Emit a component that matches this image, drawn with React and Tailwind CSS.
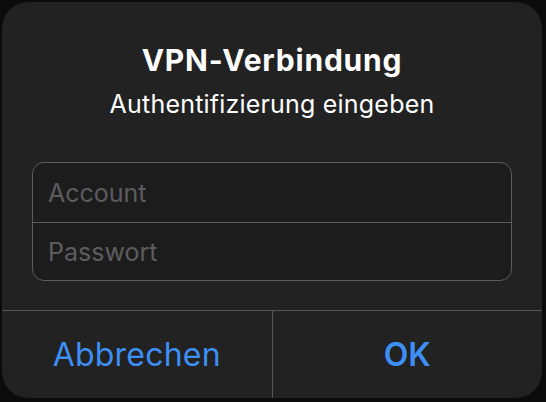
export default function App() {
  return (
    <div
      className="w-[546px] h-[402px] bg-[#0b0b0b] p-[2px]"
      style={{ fontFamily: "Inter, 'Noto Sans', sans-serif" }}
    >
      <div className="w-[540px] h-[396px] bg-[#222222] rounded-[26px] flex flex-col overflow-hidden">
        <div className="flex flex-col items-center pt-[41px]">
          <h1 className="text-[30px] leading-[34px] font-bold text-white tracking-[0.8px]">
            VPN-Verbindung
          </h1>
          <p className="mt-[12px] text-[25px] leading-[30px] text-white tracking-[0.2px]">
            Authentifizierung eingeben
          </p>
        </div>
        <div className="mx-[30px] mt-[43px] rounded-[12px] border border-[#5c5c5e] bg-[#1c1c1d] overflow-hidden">
          <div className="h-[60px] flex items-center px-[15px] border-b border-[#5c5c5e]">
            <span className="text-[25px] leading-[30px] text-[#5c5c5f]">Account</span>
          </div>
          <div className="h-[57px] flex items-center px-[15px]">
            <span className="text-[25px] leading-[30px] text-[#5c5c5f]">Passwort</span>
          </div>
        </div>
        <div className="mt-auto h-[88px] border-t border-[#555557] flex">
          <button className="flex-1 border-r border-[#555557] text-[32px] tracking-[0.2px] text-[#3e8ff5]">
            Abbrechen
          </button>
          <button className="flex-1 text-[32px] font-semibold text-[#3e8ff5]">
            OK
          </button>
        </div>
      </div>
    </div>
  );
}
